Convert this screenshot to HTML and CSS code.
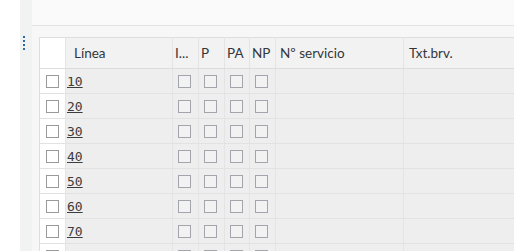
FILE: index.html
```
<!DOCTYPE html>
<html lang="es">
<head>
    <meta charset="UTF-8">
    <title>Posiciones</title>
    <link rel="stylesheet" href="styles.css">
</head>
<body>
    <div class="page">
        <!-- Barra lateral con el asa de arrastre -->
        <div class="side">
            <div class="grip">
                <span></span><span></span><span></span><span></span>
            </div>
        </div>

        <div class="main">
            <div class="top-panel"></div>

            <!-- Tabla de posiciones -->
            <table class="grid">
                <colgroup>
                    <col class="c-sel">
                    <col class="c-linea">
                    <col class="c-flag">
                    <col class="c-flag">
                    <col class="c-flag-s">
                    <col class="c-flag">
                    <col class="c-serv">
                    <col class="c-txt">
                </colgroup>
                <thead>
                    <tr>
                        <th class="h-sel"></th>
                        <th class="h-linea">Línea</th>
                        <th class="h-flag fixed">I...</th>
                        <th class="h-flag">P</th>
                        <th class="h-flag">PA</th>
                        <th class="h-flag">NP</th>
                        <th class="h-serv">Nº servicio</th>
                        <th class="h-txt">Txt.brv.</th>
                    </tr>
                </thead>
                <tbody>
                    <tr><td class="h-sel"><span class="chk"></span></td><td><a>10</a></td><td class="fixed"><span class="box"></span></td><td><span class="box"></span></td><td><span class="box"></span></td><td><span class="box"></span></td><td></td><td></td></tr>
                    <tr><td class="h-sel"><span class="chk"></span></td><td><a>20</a></td><td class="fixed"><span class="box"></span></td><td><span class="box"></span></td><td><span class="box"></span></td><td><span class="box"></span></td><td></td><td></td></tr>
                    <tr><td class="h-sel"><span class="chk"></span></td><td><a>30</a></td><td class="fixed"><span class="box"></span></td><td><span class="box"></span></td><td><span class="box"></span></td><td><span class="box"></span></td><td></td><td></td></tr>
                    <tr><td class="h-sel"><span class="chk"></span></td><td><a>40</a></td><td class="fixed"><span class="box"></span></td><td><span class="box"></span></td><td><span class="box"></span></td><td><span class="box"></span></td><td></td><td></td></tr>
                    <tr><td class="h-sel"><span class="chk"></span></td><td><a>50</a></td><td class="fixed"><span class="box"></span></td><td><span class="box"></span></td><td><span class="box"></span></td><td><span class="box"></span></td><td></td><td></td></tr>
                    <tr><td class="h-sel"><span class="chk"></span></td><td><a>60</a></td><td class="fixed"><span class="box"></span></td><td><span class="box"></span></td><td><span class="box"></span></td><td><span class="box"></span></td><td></td><td></td></tr>
                    <tr><td class="h-sel"><span class="chk"></span></td><td><a>70</a></td><td class="fixed"><span class="box"></span></td><td><span class="box"></span></td><td><span class="box"></span></td><td><span class="box"></span></td><td></td><td></td></tr>
                    <tr><td class="h-sel"><span class="chk"></span></td><td><a>80</a></td><td class="fixed"><span class="box"></span></td><td><span class="box"></span></td><td><span class="box"></span></td><td><span class="box"></span></td><td></td><td></td></tr>
                </tbody>
            </table>
        </div>
    </div>
</body>
</html>
```
FILE: styles.css
```
body {
    margin: 0;
    font-family: Lato, "Open Sans", sans-serif;
    background-color: #ffffff;
    overflow: hidden;
}

.page {
    display: flex;
    height: 251px;
    padding-left: 20px;
}

.side {
    width: 12px;
    background-color: #f1f3f3;
    flex-shrink: 0;
}

.grip {
    display: flex;
    flex-direction: column;
    gap: 2px;
    padding: 36px 0 0 3px;
}

.grip span {
    width: 2px;
    height: 2px;
    background-color: #2b6aa6;
}

.main {
    flex: 1;
    background-color: #f7f7f7;
    padding-left: 7px;
    overflow: hidden;
}

.top-panel {
    height: 25px;
    margin-left: -7px;
    background-color: #fafafa;
    border-bottom: 1px solid #e3e3e3;
    margin-bottom: 11px;
}

/* Tabla */
.grid {
    border-collapse: collapse;
    table-layout: fixed;
    width: 475px;
    border-top: 1px solid #dedede;
    border-left: 1px solid #dedede;
    color: #32363a;
    font-size: 13.5px;
}

.c-sel { width: 26px; }
.c-linea { width: 107px; }
.c-flag { width: 26px; }
.c-flag-s { width: 25px; }
.c-serv { width: 128px; }
.c-txt { width: 111px; }

.grid th {
    height: 30px;
    background-color: #f2f2f2;
    font-weight: normal;
    text-align: left;
    padding: 0 0 0 3px;
    border-right: 1px solid #e4e4e4;
    border-bottom: 1px solid #dcdcdc;
    white-space: nowrap;
    overflow: hidden;
}

.grid td {
    height: 24px;
    background-color: #eeeeee;
    padding: 0;
    border-right: 1px solid #e4e4e4;
    border-bottom: 1px solid #e2e2e2;
    vertical-align: middle;
}

.grid .h-sel {
    background-color: #ffffff;
}

.grid th.h-linea {
    padding-left: 8px;
}

.grid th.h-flag {
    padding-left: 2px;
}

.grid th.h-serv {
    padding-left: 4px;
}

.grid th.h-txt {
    padding-left: 5px;
}

.grid .fixed {
    border-left: 1px solid #6f6f6f;
}

.chk {
    display: block;
    width: 13px;
    height: 13px;
    margin-left: 6px;
    border: 1px solid #9a9a9a;
    background-color: #ffffff;
    box-sizing: border-box;
}

.box {
    display: block;
    width: 13px;
    height: 13px;
    margin-left: 5px;
    border: 1px solid #a4a4ac;
    background-color: #f2f2f2;
    box-sizing: border-box;
}

.grid a {
    font-family: "DejaVu Sans Mono", monospace;
    font-size: 13px;
    color: #3c3c3c;
    text-decoration: underline;
    padding-left: 1px;
}
```
